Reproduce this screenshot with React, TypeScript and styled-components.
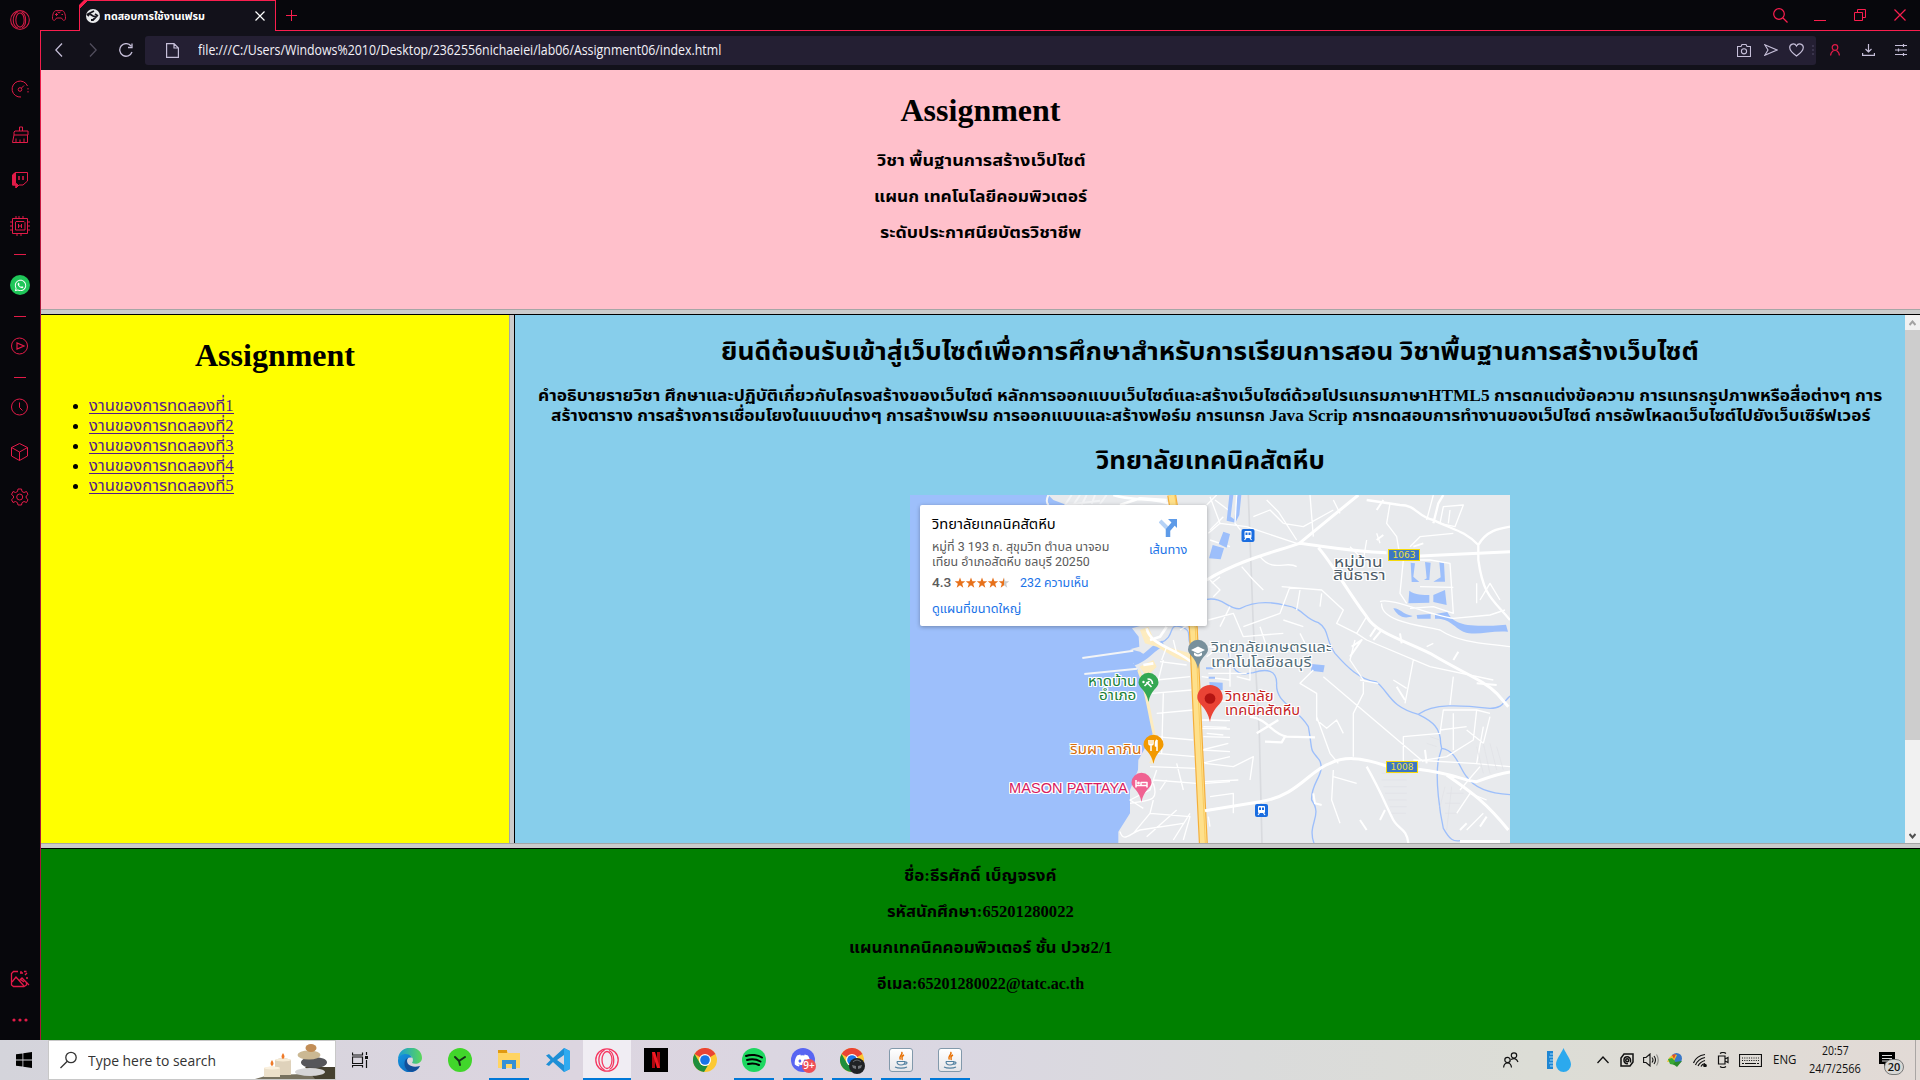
import React, { useLayoutEffect, useRef, useState } from "react";
import styled, { createGlobalStyle, css } from "styled-components";
import { FaWhatsapp, FaDiscord } from "react-icons/fa";

const RED = "#fa1e4e";
const serif = `"Liberation Serif", "Times New Roman", "Noto Sans Thai", serif`;
const ui = `"Open Sans", "Noto Sans", "Noto Sans Thai", sans-serif`;
const mapFont = `Roboto, "Noto Sans Thai", sans-serif`;

const Global = createGlobalStyle`
  * { box-sizing: border-box; }
  html, body { margin: 0; padding: 0; background: #07070c; overflow: hidden; }
  svg { display: block; flex: none; }
`;

/* Text condensed or expanded to a fixed advance width */
const FitBox = styled.span<{ $w: number }>`
  display: inline-block;
  width: ${(p) => p.$w}px;
  white-space: nowrap;
  text-align: left;
  vertical-align: top;
`;
const FitInner = styled.span`
  display: inline-block;
  white-space: nowrap;
  transform-origin: 0 50%;
`;
function Fit({ w, children }: { w: number; children: React.ReactNode }) {
  const ref = useRef<HTMLSpanElement>(null);
  const [k, setK] = useState(1);
  useLayoutEffect(() => {
    if (ref.current && ref.current.offsetWidth) setK(w / ref.current.offsetWidth);
  }, [w]);
  return (
    <FitBox $w={w}>
      <FitInner ref={ref} style={{ transform: `scaleX(${k})` }}>
        {children}
      </FitInner>
    </FitBox>
  );
}

const Screen = styled.div`
  width: 1920px;
  height: 1080px;
  display: flex;
  flex-direction: column;
  overflow: hidden;
  font-family: ${ui};
`;
const Browser = styled.div`
  display: flex;
  height: 1040px;
`;
const Side = styled.nav`
  width: 41px;
  background: linear-gradient(#07070c, #07070c) 0 0 / 40px 100% no-repeat, linear-gradient(#07070c 30px, ${RED} 30px, #a8163a 300px);
  display: flex;
  flex-direction: column;
  align-items: center;
  padding-right: 1px;
  color: #e21b48;
`;
const Slot = styled.div<{ $h: number }>`
  height: ${(p) => p.$h}px;
  width: 40px;
  display: flex;
  align-items: center;
  justify-content: center;
  flex: none;
`;
const Dash = styled.i`
  width: 12px;
  height: 1px;
  background: #e21b48;
`;
const Whats = styled.div`
  width: 20px;
  height: 20px;
  border-radius: 50%;
  background: #1fc659;
  color: #fff;
  display: flex;
  align-items: center;
  justify-content: center;
`;
const Spacer = styled.div`
  flex: 1;
`;
const Main = styled.div`
  flex: 1;
  display: flex;
  flex-direction: column;
  min-width: 0;
`;
const TabBar = styled.div`
  height: 31px;
  display: flex;
  background: #07070c;
`;
const Underlined = styled.div<{ $w?: number }>`
  ${(p) => (p.$w ? `width: ${p.$w}px;` : "flex: 1;")}
  height: 31px;
  border-bottom: 1px solid ${RED};
  display: flex;
  align-items: center;
`;
const Tab = styled.div`
  width: 197px;
  height: 31px;
  border: 1px solid ${RED};
  border-bottom: 0;
  background: linear-gradient(135deg, ${RED} 5px, #12111a 5px);
  clip-path: polygon(5px 0, 100% 0, 100% 100%, 0 100%, 0 5px);
  display: flex;
  align-items: center;
  padding-left: 6px;
  color: #fff;
  font: bold 11px/20px ${ui};
`;
const TabName = styled.div`
  margin-left: 4px;
  width: 151px;
`;
const WinButtons = styled.div`
  display: flex;
  margin-left: auto;
  color: ${RED};
`;
const WinBtn = styled.div<{ $w: number }>`
  width: ${(p) => p.$w}px;
  display: flex;
  justify-content: center;
  align-items: center;
`;
const ToolBar = styled.div`
  height: 39px;
  background: #12111a;
  display: flex;
  align-items: center;
  color: #c6bfd9;
  padding-bottom: 1px;
`;
const Nav = styled.div<{ $w: number; $dim?: boolean; $red?: boolean }>`
  width: ${(p) => p.$w}px;
  display: flex;
  justify-content: center;
  opacity: ${(p) => (p.$dim ? 0.35 : 1)};
  color: ${(p) => (p.$red ? "#e21b48" : "#c6bfd9")};
`;
const Address = styled.div`
  flex: 1;
  height: 29px;
  border-radius: 3px;
  background: #241f33;
  display: flex;
  align-items: center;
  padding-left: 21px;
  color: #f3f1f8;
  font: 14px/20px ${ui};
`;
const UrlText = styled.div`
  flex: 1;
  margin-left: 19px;
`;
const Grip = styled.i`
  width: 2px;
  height: 11px;
  margin: 0 2px 0 4px;
  background: repeating-linear-gradient(#3a344c 0 2px, transparent 2px 4px);
`;

/* Frameset */
const Frames = styled.div`
  flex: 1;
  display: flex;
  flex-direction: column;
  font: 16px/20px ${serif};
  color: #000;
`;
const Frame = styled.section<{ $bg: string; $h?: number; $w?: number }>`
  background: ${(p) => p.$bg};
  ${(p) => p.$h && `height: ${p.$h}px;`}
  ${(p) => (p.$w ? `width: ${p.$w}px;` : "")}
  overflow: hidden;
  text-align: center;
`;
const Middle = styled.div`
  height: 528px;
  display: flex;
`;
const HBar = styled.div`
  height: 6px;
  background: #cbcbcb;
  border-top: 1px solid #a6a6a6;
  border-bottom: 1px solid #000;
`;
const VBar = styled.div`
  width: 6px;
  background: #cbcbcb;
  border-left: 1px solid #a6a6a6;
  border-right: 1px solid #000;
`;
const H1 = styled.h1<{ $top: number }>`
  font: bold 32px/36px ${serif};
  margin: ${(p) => p.$top}px 0 0;
`;
const Bold = styled.p<{ $top: number }>`
  margin: ${(p) => p.$top}px 0 0;
  height: 20px;
  font: bold 16px/20px ${serif};
`;
const H2 = styled.h2<{ $top: number }>`
  font: bold 24px/30px ${serif};
  height: 30px;
  margin: ${(p) => p.$top}px 0 0;
`;
const List = styled.ul`
  margin: 23px 0 0 8px;
  padding-left: 40px;
  text-align: left;
`;
const Item = styled.li`
  height: 20px;
`;
const Link = styled.a`
  display: inline-block;
  height: 18px;
  vertical-align: top;
  border-bottom: 1px solid #551a8b;
  color: #551a8b;
`;
const Content = styled.div`
  width: 1390px;
  background: skyblue;
  text-align: center;
  overflow: hidden;
`;
const Scroll = styled.div`
  width: 15px;
  background: #f1f1f1;
  display: flex;
  flex-direction: column;
  align-items: center;
`;
const Thumb = styled.div`
  width: 15px;
  height: 410px;
  background: #cdcdcd;
`;
const Arrow = styled.div`
  height: 15px;
  display: flex;
  align-items: center;
`;

/* Map */
const MapBox = styled.div`
  position: relative;
  width: 600px;
  height: 450px;
  margin: 19px auto 0;
  background: #e8eaed;
  text-align: left;
  font-family: ${mapFont};
`;
const Card = styled.div`
  position: absolute;
  left: 10px;
  top: 10px;
  width: 287px;
  height: 121px;
  border-radius: 2px;
  background: #fff;
  box-shadow: 0 1px 4px rgba(0, 0, 0, 0.3);
  padding: 10px 12px;
  display: flex;
  justify-content: space-between;
`;
const CardCol = styled.div`
  display: flex;
  flex-direction: column;
`;
const CardLine = styled.div<{ $size: number; $lh: number; $top?: number; $c: string; $weight?: number }>`
  font-size: ${(p) => p.$size}px;
  line-height: ${(p) => p.$lh}px;
  height: ${(p) => p.$lh}px;
  margin-top: ${(p) => p.$top || 0}px;
  color: ${(p) => p.$c};
  font-weight: ${(p) => p.$weight || 400};
  display: flex;
  align-items: center;
`;
const StarGap = styled.span`
  margin: 0 11px 0 4px;
`;
const Blue = styled.span`
  color: #1a73e8;
  font-size: 12px;
  font-weight: 400;
`;
const Route = styled.div`
  display: flex;
  flex-direction: column;
  align-items: center;
  width: 54px;
  padding-top: 4px;
  color: #1a73e8;
  font-size: 12px;
  line-height: 16px;
  gap: 5px;
`;
const Label = styled.div<{ $x: number; $y: number; $c: string; $size?: number }>`
  position: absolute;
  left: ${(p) => p.$x}px;
  top: ${(p) => p.$y}px;
  color: ${(p) => p.$c};
  font-size: ${(p) => p.$size || 14}px;
  line-height: 14px;
  text-shadow: 1px 0 #fff, -1px 0 #fff, 0 1px #fff, 0 -1px #fff, 1px 1px #fff, -1px -1px #fff, 1px -1px #fff, -1px 1px #fff;
`;
const LatinLabel = styled(Label)`
  font-family: "Liberation Sans", Arial, sans-serif;
`;
const Shield = styled.div<{ $x: number; $y: number }>`
  position: absolute;
  left: ${(p) => p.$x}px;
  top: ${(p) => p.$y}px;
  width: 32px;
  height: 12px;
  border: 1px solid #f5d90a;
  background: #3c76c2;
  color: #f0e03c;
  font: 9px/10px "DejaVu Sans", sans-serif;
  text-align: center;
`;

/* Taskbar */
const Task = styled.footer`
  height: 40px;
  display: flex;
  background: linear-gradient(90deg, #d4d4db, #dcd5e0 30%, #dad7e2 50%, #dadbdb 65%, #dcddd6 80%, #e2dad6);
  color: #111;
`;
const Start = styled.div`
  width: 48px;
  display: flex;
  align-items: center;
  justify-content: center;
`;
const Search = styled.div`
  width: 288px;
  background: #fff;
  border: 1px solid #c8c8c8;
  display: flex;
  align-items: center;
  padding-left: 11px;
  font: 15px/20px ${ui};
  color: #333;
  overflow: hidden;
`;
const SearchText = styled.div`
  margin-left: 10px;
  width: 168px;
`;
const TaskCell = styled.div<{ $w?: number; $open?: boolean; $active?: boolean }>`
  width: ${(p) => p.$w || 49}px;
  height: 40px;
  position: relative;
  display: flex;
  align-items: center;
  justify-content: center;
  ${(p) => p.$active && "background: linear-gradient(90deg, transparent 1px, #f0edf3 1px);"}
  ${(p) =>
    (p.$open || p.$active) &&
    css`
      &::after {
        content: "";
        position: absolute;
        bottom: 0;
        left: ${p.$active ? 1 : 5}px;
        right: ${p.$active ? 0 : 4}px;
        height: 2px;
        background: #0078d7;
      }
    `}
`;
const Netflix = styled.div`
  width: 24px;
  height: 24px;
  background: #000;
  color: #e50914;
  display: flex;
  justify-content: center;
`;
const Java = styled.div`
  width: 24px;
  height: 24px;
  border: 1px solid #8299ab;
  border-radius: 3px;
  background: linear-gradient(#fff, #e6e6e9);
  display: flex;
  justify-content: center;
  align-items: center;
`;
const DiscordBall = styled.div`
  width: 24px;
  height: 24px;
  border-radius: 50%;
  background: #5865f2;
  color: #fff;
  display: flex;
  justify-content: center;
  align-items: center;
`;
const Nine = styled.div`
  position: absolute;
  left: 24px;
  top: 19px;
  width: 14px;
  height: 14px;
  border-radius: 50%;
  background: #ee4e56;
  color: #fff;
  font: 600 10px/13px ${ui};
  text-align: center;
`;
const Helmet = styled.svg`
  position: absolute;
  left: 22px;
  top: 18px;
`;
const Tray = styled.div`
  display: flex;
  margin-left: auto;
  align-items: center;
`;
const TrayCell = styled.div<{ $w: number }>`
  width: ${(p) => p.$w}px;
  display: flex;
  justify-content: center;
  align-items: center;
  flex: none;
  position: relative;
`;
const Clock = styled.div`
  width: 70px;
  text-align: center;
  font: 12px/18px ${ui};
  display: flex;
  flex-direction: column;
  align-items: center;
`;
const Lang = styled.div`
  width: 31px;
  text-align: center;
  font: 12px/20px ${ui};
`;
const Count = styled.div`
  position: absolute;
  left: 14px;
  top: 7px;
  width: 20px;
  height: 16px;
  border-radius: 8px;
  border: 1px solid #777;
  background: #d8d8d6;
  font: 600 11px/14px ${ui};
  text-align: center;
`;
const Peek = styled.div`
  width: 5px;
  height: 40px;
  margin-left: 11px;
  border-left: 1px solid #aaa6a4;
`;

type IconProps = { w?: number; h?: number; vb?: string; sw?: number; children: React.ReactNode };
const Ic = ({ w = 18, h = 18, vb, sw = 1, children }: IconProps) => (
  <svg width={w} height={h} viewBox={vb || `0 0 ${w} ${h}`} fill="none" stroke="currentColor" strokeWidth={sw}>
    {children}
  </svg>
);

const Chrome = () => (
  <svg width="24" height="24" viewBox="0 0 24 24">
    <circle cx="12" cy="12" r="12" fill="#fcc934" />
    <path d="M12 12 1.6 6A12 12 0 0 1 22.4 6Z" fill="#ea4335" />
    <path d="M1.6 6 6.800 15A6 6 0 0 0 15 17.200L11 24A12 12 0 0 1 1.6 6Z" fill="#1e8e3e" />
    <circle cx="12" cy="12" r="6" fill="#fff" />
    <circle cx="12" cy="12" r="4.8" fill="#1a73e8" />
  </svg>
);
const JavaIcon = () => (
  <Java>
    <svg width="18" height="20" viewBox="0 0 18 20" fill="none">
      <path d="M9.500 2C12 4 6 6 8.500 9.500M12 5C8 7 11 8 10 10" stroke="#e76f00" strokeWidth="1.400" />
      <path d="M5 11.500H13M5 11.500C5 14 6 15 9 15S13 14 13 11.500M13 12C16 11.500 15.500 14.500 12.500 14M3 17C6 18.500 12 18.500 15 17" stroke="#5382a1" strokeWidth="1.200" />
    </svg>
  </Java>
);
const OperaRing = ({ size, c, sw }: { size: number; c: string; sw: number }) => (
  <svg width={size} height={size} viewBox="0 0 24 24" fill="none" stroke={c} strokeWidth={sw}>
    <circle cx="12" cy="12" r="11.200" />
    <ellipse cx="12" cy="12" rx="5" ry="8.500" />
    <path d="M9.500 2C2 6 2 18 9.500 22M14 2.500C20 5 20.500 18.500 14.500 21.500" />
  </svg>
);

/* A pin whose tip sits at x, y */
const Pin = ({ x, y, s, c, children }: { x: number; y: number; s: number; c: string; children?: React.ReactNode }) => (
  <g transform={`translate(${x} ${y}) scale(${s})`}>
    <path d="M0 0C-2-12-10-14-10-19.500A10 9.700 0 0 1 10-19.500C10-14 2-12 0 0Z" fill={c} />
    {children}
  </g>
);
const Train = ({ x, y }: { x: number; y: number }) => (
  <g transform={`translate(${x} ${y})`}>
    <rect x="-6.500" y="-6.500" width="13" height="13" rx="2" fill="#1a6de0" />
    <rect x="-3.500" y="-4.500" width="7" height="7" rx="1" fill="#fff" />
    <path d="M-2.500-3H-.5V-.5H-2.500ZM.5-3H2.500V-.5H.5Z" fill="#1a6de0" />
    <path d="M-3.500 4.500-2 2.500M3.500 4.500 2 2.500" stroke="#fff" strokeWidth="1.200" />
  </g>
);

const MapArt = () => (
  <svg width="600" height="348" viewBox="0 0 600 348" fill="none" strokeLinejoin="round">
    <g transform="translate(-10 -15) scale(.33333)">
      <path fill="#9dbffb" d="M30 45H445L460 60 500 75H600L560 150 690 300 720 438 696 445 716 470 718 500 690 508 720 515 735 525 700 550 714 570 735 640 745 680 760 760 715 840 714 870 690 930 690 1000 655 1055V1090H30Z" />
      <path stroke="#9dbffb" strokeWidth="18" d="M700 548C750 530 750 505 790 490" />
      <path stroke="#9dbffb" strokeWidth="4" d="M780 490C830 470 800 430 840 440S860 470 870 490" />
      <path stroke="#f3f4f6" strokeWidth="6" d="M547 534 700 512M553 582 712 566M445 45C438 60 440 70 446 75M495 75 515 45M520 75 540 45M545 75 560 45M575 72 585 45M600 72 620 45M500 75 600 62" />
      <path fill="#e8eaed" d="M600 75 640 45H815L850 75Z" />
      <path fill="#fdecc0" d="M720 450 745 440 760 475 800 500 870 520 880 550 830 535 770 500 735 490ZM718 560 760 540 770 560 740 590Z" />
      <path stroke="#fdecc0" strokeWidth="9" d="M716 570C740 630 745 690 763 765M752 850 765 825" />
      <path stroke="#fff" strokeWidth="8" d="M740 445C750 500 840 505 890 560M750 480 780 470 800 440M730 555 760 550M660 75 720 55 800 60M640 45C700 65 760 50 820 75" />
      <path stroke="#fff" strokeWidth="4" d="M780 545 860 555M770 600 870 590M755 640 875 630M770 700 880 690M790 640 785 820M765 770 880 780M770 820 885 830M750 860 890 865M760 900 890 910M770 870 750 930 690 960 730 985M690 970C740 960 780 970 760 910M780 930 800 900M750 1000 760 960M830 850 850 930M660 1055C670 1090 690 1060 720 1050L850 1030M700 1060 750 1000 870 1010 850 1080M740 1070 830 990M820 1080 870 1000M790 540 775 600M820 480 830 520M840 450 870 430M800 500 785 540" />
      <path stroke="#fff" strokeWidth="4" d="M920 75 950 45M945 60 985 90M930 150 970 110M930 180 990 200M930 300 960 330 940 350M960 290 935 310M925 500 985 510M935 560 985 550M905 590 990 600M920 660 990 665M905 720 990 722M905 745 990 747M910 770 990 772M905 810 985 790M905 850 990 830M915 910 990 905M920 990 990 980M930 1040 925 1010" />
      <path stroke="#f4ae3a" strokeWidth="27" d="M815 45 880 445 893 740 910 1090" />
      <path stroke="#fee08b" strokeWidth="20" d="M815 45 880 445 893 740 910 1090" />
      <path stroke="#f7c04a" strokeWidth="2" d="M824 45 886 445 899 740 916 1090" />
    </g>
    <g transform="translate(290 -15) scale(.33333)">
      <path fill="#9dbffb" d="M88 45H100L92 110 103 118 112 45H124L118 105 106 128 80 122ZM70 155 90 162 80 203 56 192ZM38 195 72 205 62 238 27 235ZM632 248 645 250 640 290 658 306 635 306ZM675 246 692 248 688 300H672L680 295ZM718 246 732 250 735 305H700L722 292ZM628 332C645 345 670 345 688 345V368L625 370ZM700 345 735 330 740 375 700 366ZM580 385C600 384 605 402 638 408 610 420 590 405 580 385ZM650 405 692 402V416H652ZM705 402 742 396C760 430 790 445 918 434L924 455C870 450 830 470 790 455 760 440 750 415 705 416ZM335 552 374 556 370 577 333 572ZM28 606 68 608V630H30ZM18 562H40V568H18ZM26 590H45V596H26Z" />
      <path stroke="#d9dbdf" strokeWidth="5" d="M145 45 160 440 178 760 186 1090" />
      <path stroke="#9dbffb" strokeWidth="4" d="M20 358C70 350 85 390 120 386 150 370 190 358 260 377 310 385 310 415 355 428 390 450 375 480 405 520 440 560 480 600 530 606 570 640 570 680 655 703 700 725 722 745 722 790L725 805C770 810 780 870 800 890 820 920 860 940 930 944M655 703C700 670 780 675 870 685 910 685 910 665 930 648M725 805 715 840C705 900 720 1000 730 1045 750 1080 760 1085 780 1082M85 520C100 590 130 585 160 578 200 565 230 570 230 610 225 670 290 680 325 740 340 820 325 800 358 840 380 880 330 910 335 960 370 1010 320 1030 342 1090" />
      <path stroke="#fff" strokeWidth="9" d="M20 300C120 240 210 220 298 190L475 45M298 190C380 200 450 215 560 218M660 228 930 215M355 203C390 240 440 330 500 410 530 460 610 480 690 520 790 580 850 600 890 640L925 680M15 992 180 965C290 950 330 870 390 850 430 830 480 830 560 858M655 868C760 880 800 905 830 905 870 890 900 880 930 876M740 885C820 940 860 970 925 1050" />
      <path stroke="#fff" strokeWidth="7" d="M500 60 600 75C650 75 650 110 700 120 760 150 790 150 835 195V240C850 350 880 360 930 420M700 130 715 70 730 45M835 195C860 150 900 145 930 140M500 860C540 930 560 980 575 1010 590 1050 620 1040 625 1090M150 710C210 720 210 760 260 770L345 772M170 760 235 720M195 785 245 787 255 770" />
      <path stroke="#fff" strokeWidth="4" d="M30 50 60 130 140 140 290 190M60 130 25 160M110 45 105 130 130 160M200 60 235 95 290 180M160 110 210 90 250 130M125 260 160 300 190 330M180 230C220 280 260 240 290 260M250 130 310 140 400 90M340 170 330 45M400 60 420 100M450 200 490 240 500 180M530 160 540 190M600 230 590 170 560 130 570 70M630 200 660 170 760 160M700 45 680 120M730 80 790 75 765 140 720 130ZM750 90 745 130M660 320 760 322M620 370 600 340 610 240 690 240 750 250 760 400 700 380 630 385M540 365C570 350 700 410 760 415L870 405 915 390M545 370C540 430 690 440 720 450 780 490 860 490 930 500M840 360 870 310 900 360M830 310V370M245 320 365 330 430 390 410 430 470 460 500 410M270 320 240 400 130 440M300 330 290 390M365 340 360 380M90 380 60 440M25 420 100 400 130 470 250 460M180 440 200 500M250 420 310 440M300 460 330 520M470 460 500 480 690 560 880 600M760 590 750 675M640 540 615 670M580 600 620 625M370 590 670 845M340 570 300 610 350 640 350 720 380 745 410 720 430 760M350 710 390 820 415 850M465 480 450 540 490 600 490 640 460 700 460 830M480 600 535 610M400 870 395 960 420 1030M400 890 470 910M610 850V770L720 760 730 690 830 690 820 780 740 830ZM720 750 800 740M760 700V810M800 750 850 790 870 710M830 690 870 700M680 500 700 490M640 840 820 850 930 860M830 850 850 740M780 930 840 860M770 1000 810 940 860 960M800 1050 850 1000M15 850 100 860 160 830 150 900M15 905 115 900M100 1000V940L30 950M10 810 90 815M20 760 70 765M10 740 80 742M10 720 80 722M110 590 150 600 150 520M90 480V620M25 580H140M20 530 60 500" />
      <path stroke="#fff" strokeWidth="6" d="M510 470 530 440M520 480 545 450M605 490 600 460M760 540 775 515M830 610 890 615M615 660 590 620M450 530 485 480 455 500M540 1020 555 990M500 1050 480 1020M340 940 345 970 365 975M680 850 675 810M780 1050 800 1030M860 1010 840 1040M530 90 550 60M640 200 670 190M550 165 530 180" />
      <path stroke="#dfe1e5" strokeWidth="2" d="M545 880H620M545 900H620M550 920H620M555 940H620M565 960H620M570 980H620M575 1000H618M850 880 830 800M870 880 850 790M890 870 870 790M910 870 890 800M680 790 710 800M690 770 720 780M735 920 720 980M755 920 740 1050M740 940H790M735 970H780M735 1000H770" />
      <path fill="#fff" d="M780 1080H900V1090H780Z" />
    </g>
    <Train x={338} y={40.500} />
    <Train x={351.500} y={315.500} />
    <Pin x={288} y={174} s={1} c="#78909c">
      <path d="M-7-19 0-22.500 7-19 0-15.500ZM-4-16.500V-14C-2-12 2-12 4-14V-16.500L0-14.500Z" fill="#fff" />
    </Pin>
    <Pin x={238.500} y={207} s={1} c="#34a853">
      <path d="M-4-16 1-21M-1-23C2-23 4-21 4-18M-2-20 3-15" stroke="#fff" strokeWidth="1.600" />
      <circle cx="-5" cy="-20" r="1.200" fill="#fff" />
    </Pin>
    <Pin x={243.500} y={269} s={1} c="#f29900">
      <path d="M-4.500-24V-20.500C-4.500-18.500-.5-18.500-.5-20.500V-24M-2.500-24V-13M3.500-24V-13M3.500-24C1.500-23 2-20 2-18H3.500" stroke="#fff" strokeWidth="1.500" />
    </Pin>
    <Pin x={231.500} y={307} s={1} c="#f06292">
      <path d="M-5.500-22V-14.500M-5.500-16.500H5.500V-14.500M5.500-17V-19.500H-.5V-17" stroke="#fff" strokeWidth="1.500" />
      <circle cx="-3" cy="-19" r="1.400" fill="#fff" />
    </Pin>
    <Pin x={300} y={227} s={1.270} c="#ea4335">
      <circle cx="0" cy="-18.500" r="4.200" fill="#b31412" />
    </Pin>
  </svg>
);

const Stars = () => (
  <svg width="54" height="12" viewBox="0 0 54 12">
    <defs>
      <linearGradient id="half">
        <stop offset=".5" stopColor="#e7711b" />
        <stop offset=".5" stopColor="#ccc" />
      </linearGradient>
    </defs>
    {[0, 1, 2, 3, 4].map((i) => (
      <path key={i} transform={`translate(${i * 11} 0)`} d="M5 .5 6.400 4.300H10.200L7.200 6.700 8.300 10.700 5 8.300 1.700 10.700 2.800 6.700-.2 4.300H3.600Z" fill={i === 4 ? "url(#half)" : "#e7711b"} />
    ))}
  </svg>
);

const Sidebar = () => (
  <Side>
    <Slot $h={40}><OperaRing size={20} c="#d01c45" sw={1.300} /></Slot>
    <Slot $h={26} />
    <Slot $h={46}>
      <Ic><path d="M10 17A8 8 0 1 1 16.500 6" /><path d="M17 8V14" strokeDasharray="1.500 1.500" /><circle cx="9" cy="9.500" r="1.800" /><path d="M10.500 8 13 5.500" /></Ic>
    </Slot>
    <Slot $h={45}>
      <Ic><path d="M8.500 5V1H11.500V5M4 5H17V9H3V6ZM3 9 1.500 16.500H16.500V9M5 16.500V12.500M9 16.500V13.500M13 16.500V12.500" /></Ic>
    </Slot>
    <Slot $h={45}>
      <Ic><path d="M4.500 1.500H16.500V10L12 14H8L5 17V14H1.500V4Z" /><path d="M1.500 4 4.500 1.500V12L7 14 5 17V14H1.500Z" fill="currentColor" /><path d="M8 5V9M12 5V9" strokeWidth="1.500" /></Ic>
    </Slot>
    <Slot $h={47}>
      <Ic w={20} h={20}><path d="M2.500 2.500H17.500V17.500H2.500Z" /><path d="M6 5.500H14L15 6.500V14H5.500V6ZM8.500 8V12M11.500 8V12M8.500 10H11.500" /><path d="M6 0V2M9 0V2M13 0V2M0 6H2M0 10H2M0 14H2M18 6H20M18 10H20M18 14H20M7 17V20M11 17V20" /></Ic>
    </Slot>
    <Slot $h={11}><Dash /></Slot>
    <Slot $h={50}><Whats><FaWhatsapp size={13} /></Whats></Slot>
    <Slot $h={12}><Dash /></Slot>
    <Slot $h={48}><Ic><circle cx="8.500" cy="9" r="8" /><path d="M6 6V12L13 9 6 6Z" strokeWidth="1.200" /></Ic></Slot>
    <Slot $h={14}><Dash /></Slot>
    <Slot $h={46}><Ic><circle cx="8.500" cy="9" r="8" /><path d="M8.500 4.500V9.500L11.500 12.500" /></Ic></Slot>
    <Slot $h={44}><Ic><path d="M8.500.5 16.500 4.500V13L8.500 17.500.5 13V4.500ZM.5 4.500 8.500 9 16.500 4.500M8.500 9V17.500" /></Ic></Slot>
    <Slot $h={46}>
      <Ic>
        <path d="M7 1H10.500L11 3.500 13 4.500 15.500 3.500 17 6.500 15.200 8V10L17 11.700 15.500 14.500 13 13.500 11 14.700 10.500 17H7L6.500 14.700 4.500 13.500 2 14.500.5 11.700 2.500 10V8L.5 6.500 2 3.500 4.500 4.500 6.500 3.500Z" />
        <circle cx="8.700" cy="9" r="3" />
      </Ic>
    </Slot>
    <Spacer />
    <Slot $h={43}>
      <Ic w={20}><path d="M8 1.500H3.500L1.500 3.500V15L3.500 16.500H14L16.500 15V12" strokeWidth="1.300" /><path d="M2 12 6 7 14 16M9 11 12 8 19 15M14 12 10 9M11 3V1M10 3H13M15 5 17 3M16 8H18M14 1.500H16.500" strokeWidth="1.300" /></Ic>
    </Slot>
    <Slot $h={40}>
      <svg width="16" height="4" fill="#e21b48"><circle cx="2" cy="2" r="1.600" /><circle cx="8" cy="2" r="1.600" /><circle cx="14" cy="2" r="1.600" /></svg>
    </Slot>
  </Side>
);

const TaskBar = () => (
  <Task>
    <Start>
      <svg width="16" height="16" fill="#000"><path d="M0 2.300 6.500 1.400V7.600H0ZM7.300 1.300 16 0V7.600H7.300ZM0 8.400H6.500V14.600L0 13.700ZM7.300 8.400H16V16L7.300 14.700Z" /></svg>
    </Start>
    <Search>
      <Ic w={18} h={18} sw={1.300}><circle cx="11" cy="6.500" r="5.200" /><path d="M7.300 10.200.5 17" /></Ic>
      <SearchText><Fit w={128}>Type here to search</Fit></SearchText>
      <svg width="80" height="38" viewBox="0 0 80 38">
        <path d="M0 38 14 34 50 33 80 26V38Z" fill="#77715f" />
        <path d="M50 26H80V38H60Z" fill="#45402f" />
        <path d="M20 19Q28 15 36 19V34H20Z" fill="#dfd2bb" />
        <path d="M9 27Q17 24 25 27V36H9Z" fill="#ece0ca" />
        <ellipse cx="28" cy="19" rx="8" ry="1.500" fill="#f6ebd6" />
        <ellipse cx="17" cy="27" rx="8" ry="1.500" fill="#fbf1df" />
        <path d="M28 12Q31 16 28 18 25 16 28 12ZM17 19Q20 23 17 25 14 23 17 19Z" fill="#ef7a28" />
        <ellipse cx="55" cy="31" rx="15" ry="4" fill="#d6d5d7" />
        <ellipse cx="59" cy="21.500" rx="13" ry="5.500" fill="#56565a" />
        <ellipse cx="54" cy="14" rx="11.500" ry="4.500" fill="#cbb893" />
        <ellipse cx="56" cy="7" rx="5.500" ry="4" fill="#c28d56" />
      </svg>
    </Search>
    <TaskCell $w={48}>
      <Ic w={16} h={16} sw={1.200}><path d="M.5.5V3H10.500V.5M.5 5H10.500V11.500H.5ZM.5 15.500V13.500H10.500V15.500M14.500 0V3M14.500 8V16" /><path d="M13 4H16V7H13Z" fill="currentColor" stroke="none" /></Ic>
    </TaskCell>
    <TaskCell $w={51}>
      <svg width="24" height="24" viewBox="0 0 24 24">
        <defs>
          <linearGradient id="edge" x1="0" x2="1"><stop stopColor="#199bd8" /><stop offset="1" stopColor="#5bd75a" /></linearGradient>
          <linearGradient id="edgeB" x1="0" x2="1" y1="0" y2="1"><stop stopColor="#1593df" /><stop offset="1" stopColor="#0b60b4" /></linearGradient>
        </defs>
        <path d="M0 11C1-4 24-4 24 10 24 15 18 17 14 15 16 12 15 8 10 7 6 6 2 8 0 11Z" fill="url(#edge)" />
        <path d="M0 12C1 5 12 4 14 10 9 8 7 14 10 18S18 22 22 18C18 25 10 26 5 22 1 19 0 16 0 12Z" fill="url(#edgeB)" />
        <path d="M10 10C7 14 11 21 22 18 19 24 13 25 9 22 5 18 6 11 10 10Z" fill="#124f9a" />
      </svg>
    </TaskCell>
    <TaskCell>
      <svg width="24" height="24" viewBox="0 0 24 24"><circle cx="12" cy="12" r="12" fill="#41d62b" /><path d="M7 9 11 13 17 9M11 13 12 17" stroke="#16301a" strokeWidth="2" fill="none" strokeLinecap="round" /></svg>
    </TaskCell>
    <TaskCell $open>
      <svg width="22" height="20" viewBox="0 0 22 20"><path d="M0 1H9L10.500 3H22V18H0Z" fill="#ffd462" /><path d="M0 0H9V3H0Z" fill="#e09a10" /><path d="M4 19V10H18V19H14V14H8V19Z" fill="#3590d5" /></svg>
    </TaskCell>
    <TaskCell>
      <svg width="24" height="24" viewBox="0 0 24 24"><path d="M18 0 24 3V21L18 24 7 14 3 18 0 16.500 4.500 12 0 7.500 3 6 7 10ZM18 7 11 12 18 17Z" fill="#1e8fd6" fillRule="evenodd" /><path d="M18 0 24 3V21L18 24Z" fill="#2faaf0" /></svg>
    </TaskCell>
    <TaskCell $active><OperaRing size={24} c="#f5365f" sw={1.300} /></TaskCell>
    <TaskCell>
      <Netflix><svg width="10" height="24" viewBox="0 0 10 24"><path d="M1 4H4V20H1ZM6 4H9V20H6Z" fill="#b20710" /><path d="M1 4H4L9 20H6Z" fill="#f01a24" /></svg></Netflix>
    </TaskCell>
    <TaskCell><Chrome /></TaskCell>
    <TaskCell $open>
      <svg width="24" height="24" viewBox="0 0 24 24"><circle cx="12" cy="12" r="12" fill="#1ed760" /><path d="M4 8C9 6 16 7 20 9.500M5 12C10 10.500 15 11.500 18.500 13.500M6 16C10 15 14 15.500 17 17" fill="none" stroke="#000" strokeWidth="2" strokeLinecap="round" /></svg>
    </TaskCell>
    <TaskCell $open><DiscordBall><FaDiscord size={17} /></DiscordBall><Nine>9+</Nine></TaskCell>
    <TaskCell $open>
      <Chrome />
      <Helmet width="16" height="16" viewBox="0 0 16 16"><circle cx="8" cy="8" r="8" fill="#202225" /><path d="M3 7 7 8V11L4 10ZM9 8 13 7 12 10 9 11Z" fill="#73767b" /><path d="M4 4Q8 0 12 4" stroke="#66696e" fill="none" /></Helmet>
    </TaskCell>
    <TaskCell $open><JavaIcon /></TaskCell>
    <TaskCell $open><JavaIcon /></TaskCell>
    <Tray>
      <TrayCell $w={34}><Ic w={16} h={16} sw={1.200}><circle cx="11" cy="3.500" r="2.700" /><path d="M8 7.500Q13 5 15 10M.6 15.500Q1 11 4.500 11T8.500 15.500" /><circle cx="4.500" cy="8" r="2.700" /></Ic></TrayCell>
      <TrayCell $w={62}>
        <svg width="26" height="24" viewBox="0 0 26 24"><path d="M1 3H7V21H1Z" fill="#1d86d3" /><path d="M4 6H7M3 9H7M4 12H7M3 15H7M4 18H7" stroke="#9ed8fa" /><path d="M17.500 0C20 6 25 11 25 16.500A7.500 7.500 0 0 1 10 16.500C10 11 15 6 17.500 0Z" fill="#2ba9ee" /></svg>
      </TrayCell>
      <TrayCell $w={26}><Ic w={12} h={8} sw={1.300}><path d="M.5 7 6 1 11.500 7" /></Ic></TrayCell>
      <TrayCell $w={22}><Ic w={14} h={14} sw={1.500}><path d="M4 1H13V9L10 13H1V5ZM4 7A3.200 3.200 0 0 1 10.500 7V9.500" /><circle cx="7.200" cy="7.200" r="1.500" /><path d="M4 7A3.200 3.200 0 0 0 8 10.500" /></Ic></TrayCell>
      <TrayCell $w={26}><Ic w={17} h={14} sw={1.100}><path d="M.6 4.500H3L7 1V13L3 9.500H.6ZM9 4.500Q11 7 9 9.500M11 3Q14 7 11 11" /><path d="M13.500 1.500Q17 7 13.500 12.500" opacity=".4" /></Ic></TrayCell>
      <TrayCell $w={22}>
        <svg width="16" height="14" viewBox="0 0 16 14"><circle cx="9.500" cy="5.500" r="5.500" fill="#3978c7" /><path d="M0 9C2 3 7 0 10 2L7 8Z" fill="#f0c62c" /><path d="M1 6 5 5 8 8 8 12 3 11Z" fill="#38a835" /><path d="M5 2 9 1 7 6Z" fill="#e04b2c" /><path d="M8 9 15 8 10 14 6 11Z" fill="#2a8a2c" /></svg>
      </TrayCell>
      <TrayCell $w={28}><Ic w={14} h={14} sw={1.200}><path d="M.5 10Q3 3 12 1.500M2.500 12Q5 6 12 4.500M5 13Q7 9 12 7.500M8 13.500Q9 11 12 10.500" /><circle cx="12" cy="12.500" r="1.200" fill="currentColor" /></Ic></TrayCell>
      <TrayCell $w={18}><Ic w={12} h={16} sw={1.200}><path d="M3 1.500Q6-.5 9 1.500M3 14.500Q6 16.500 9 14.500M1.500 4H8V12H1.500ZM8 7 11 5.500V10.500L8 9" /></Ic></TrayCell>
      <TrayCell $w={37}><Ic w={23} h={13}><path d="M.5.5H22.500V12.500H.5Z" strokeWidth="1.200" /><path d="M3 4H20M3 6.500H20" strokeDasharray="1 1.300" /><path d="M3 9.500H5M6 9.500H17M18 9.500H20" /></Ic></TrayCell>
      <Lang><Fit w={23}>ENG</Fit></Lang>
      <Clock><Fit w={27}>20:57</Fit><Fit w={52}>24/7/2566</Fit></Clock>
      <TrayCell $w={34}>
        <svg width="16" height="16" viewBox="0 0 16 16"><path d="M0 0H16V12H8L5 15V12H0Z" fill="#000" /><path d="M3 3.500H13M3 6.500H13M3 9H9" stroke="#ddd" /></svg>
        <Count>20</Count>
      </TrayCell>
      <Peek />
    </Tray>
  </Task>
);

const jobs = [1, 2, 3, 4, 5];

export default function App() {
  return (
    <Screen>
      <Global />
      <Browser>
        <Sidebar />
        <Main>
          <TabBar>
            <Underlined $w={38}>
              <WinBtn $w={36}>
                <Ic w={14} h={11}><g stroke="#d01c45"><path d="M4 .6H10C12 .6 13.500 4 13.500 8 13.500 10.500 11.500 11 10.500 9.500L9.500 8H4.500L3.500 9.500C2.500 11 .5 10.500 .5 8 .5 4 2 .6 4 .6ZM5.500 2 7 3 8.500 2M3 4.500H6M4.500 3V6M9.500 4.500H11" /></g></Ic>
              </WinBtn>
            </Underlined>
            <Tab>
              <svg width="14" height="14" viewBox="0 0 14 14"><circle cx="7" cy="7" r="7" fill="#e9eaec" /><path d="M8 2 3 4.500 7 7 10 8 7 11 5 11M9 5 12 7M1 5 3 7" stroke="#15141d" strokeWidth="1.800" fill="none" /></svg>
              <TabName><Fit w={101}>ทดสอบการใช้งานเฟรม</Fit></TabName>
              <Ic w={10} h={10} sw={1.200}><path d="M.5.5 9.500 9.500M9.500.5.5 9.500" /></Ic>
            </Tab>
            <Underlined>
              <WinBtn $w={30}><Ic w={11} h={11}><path stroke={RED} d="M5.500 0V11M0 5.500H11" /></Ic></WinBtn>
              <WinButtons>
                <WinBtn $w={40}><Ic w={15} h={15} sw={1.200}><circle cx="6" cy="6" r="5.300" /><path d="M10 10 14.500 14.500" /></Ic></WinBtn>
                <WinBtn $w={40}><Ic w={12} h={12}><path d="M0 11.500H12" /></Ic></WinBtn>
                <WinBtn $w={40}><Ic w={12} h={12}><path d="M.5 3.500H8.500V11.500H.5ZM3.500 3.500V.5H11.500V8.500H8.500" /></Ic></WinBtn>
                <WinBtn $w={40}><Ic w={12} h={12} sw={1.200}><path d="M.5.5 11.500 11.500M11.500.5.5 11.500" /></Ic></WinBtn>
              </WinButtons>
            </Underlined>
          </TabBar>
          <ToolBar>
            <Nav $w={35}><Ic w={8} h={14} sw={1.300}><path d="M7 .5.8 7 7 13.500" /></Ic></Nav>
            <Nav $w={33} $dim><Ic w={8} h={14} sw={1.300}><path d="M1 .5 7.200 7 1 13.500" /></Ic></Nav>
            <Nav $w={34}><Ic w={14} h={14} sw={1.300}><path d="M13 9A6.300 6.300 0 1 1 12 3M13 .5V4.500H9" /></Ic></Nav>
            <Nav $w={2} />
            <Address>
              <Ic w={13} h={15} sw={1.200}><path stroke="#c6bfd9" d="M.6.6H8L12.400 5V14.400H.6ZM8 .6V5H12.400" /></Ic>
              <UrlText><Fit w={523}>file:///C:/Users/Windows%2010/Desktop/2362556nichaeiei/lab06/Assignment06/index.html</Fit></UrlText>
              <Nav $w={26}><Ic w={14} h={13} sw={1.100}><path d="M.5 2.500H4L5 .5H9L10 2.500H13.500V12.500H.5Z" /><circle cx="7" cy="7.300" r="2.600" /></Ic></Nav>
              <Nav $w={27}><Ic w={14} h={12} sw={1.100}><path d="M.8.800 13 6 .8 11.300 4 6Z" /></Ic></Nav>
              <Nav $w={24}><Ic w={15} h={14} sw={1.200}><path d="M7.500 13C2 9 .7 7 .7 4.500 .7 1 5.500-.5 7.500 3 9.500-.5 14.300 1 14.300 4.500 14.300 7 13 9 7.500 13Z" /></Ic></Nav>
              <Grip />
            </Address>
            <Nav $w={37} $red><Ic w={10} h={12} sw={1.200}><circle cx="5" cy="3.500" r="2.800" /><path d="M.6 11.500C.6 8.500 2 7.500 3.500 6.500M9.400 11.500C9.400 8.500 8 7.500 6.500 6.500" /></Ic></Nav>
            <Nav $w={30}><Ic w={13} h={12} sw={1.200}><path d="M6.500 0V8M3.500 5 6.500 8 9.500 5M.6 9V11.400H12.400V9" /></Ic></Nav>
            <Nav $w={36}><Ic w={12} h={12} sw={1.200}><path d="M0 1.500H12M0 6H12M0 10.500H12M8.500 0V3M3.500 4.500V7.500M8.500 9V12" /></Ic></Nav>
            <Nav $w={1} />
          </ToolBar>
          <Frames>
            <Frame $bg="pink" $h={239}>
              <H1 $top={22}><Fit w={160}>Assignment</Fit></H1>
              <Bold $top={23}><Fit w={208}>วิชา พื้นฐานการสร้างเว็ปไซต์</Fit></Bold>
              <Bold $top={16}><Fit w={213}>แผนก เทคโนโลยีคอมพิวเตอร์</Fit></Bold>
              <Bold $top={16}><Fit w={201}>ระดับประกาศนียบัตรวิชาชีพ</Fit></Bold>
            </Frame>
            <HBar />
            <Middle>
              <Frame $bg="#ffff00" $w={468}>
                <H1 $top={22}><Fit w={160}>Assignment</Fit></H1>
                <List>
                  {jobs.map((n) => (
                    <Item key={n}><Link><Fit w={145}>งานของการทดลองที่{n}</Fit></Link></Item>
                  ))}
                </List>
              </Frame>
              <VBar />
              <Content>
                <H2 $top={22}><Fit w={978}>ยินดีต้อนรับเข้าสู่เว็บไซต์เพื่อการศึกษาสำหรับการเรียนการสอน วิชาพื้นฐานการสร้างเว็บไซต์</Fit></H2>
                <Bold $top={19}><Fit w={1344}>คำอธิบายรายวิชา ศึกษาและปฏิบัติเกี่ยวกับโครงสร้างของเว็บไซต์ หลักการออกแบบเว็บไซต์และสร้างเว็บไซต์ด้วยโปรแกรมภาษาHTML5 การตกแต่งข้อความ การแทรกรูปภาพหรือสื่อต่างๆ การ</Fit></Bold>
                <Bold $top={0}><Fit w={1319}>สร้างตาราง การสร้างการเชื่อมโยงในแบบต่างๆ การสร้างเฟรม การออกแบบและสร้างฟอร์ม การแทรก Java Scrip การทดสอบการทำงานของเว็ปไซต์ การอัพโหลดเว็บไซต์ไปยังเว็บเซิร์ฟเวอร์</Fit></Bold>
                <H2 $top={20}><Fit w={229}>วิทยาลัยเทคนิคสัตหีบ</Fit></H2>
                <MapBox>
                  <MapArt />
                  <Label $x={178} $y={179} $c="#188038"><Fit w={48}>หาดบ้าน</Fit></Label>
                  <Label $x={189} $y={193} $c="#188038"><Fit w={37}>อำเภอ</Fit></Label>
                  <Label $x={160} $y={247} $c="#d56e0c"><Fit w={71}>ริมผา ลาภิน</Fit></Label>
                  <LatinLabel $x={99} $y={286} $c="#d81b60"><Fit w={119}>MASON PATTAYA</Fit></LatinLabel>
                  <Label $x={301} $y={145} $c="#546e7a"><Fit w={121}>วิทยาลัยเกษตรและ</Fit></Label>
                  <Label $x={301} $y={160} $c="#546e7a"><Fit w={101}>เทคโนโลยีชลบุรี</Fit></Label>
                  <Label $x={315} $y={194} $c="#c5221f"><Fit w={49}>วิทยาลัย</Fit></Label>
                  <Label $x={315} $y={208} $c="#c5221f"><Fit w={75}>เทคนิคสัตหีบ</Fit></Label>
                  <Label $x={424} $y={60} $c="#4b5a66"><Fit w={49}>หมู่บ้าน</Fit></Label>
                  <Label $x={423} $y={73} $c="#4b5a66"><Fit w={52}>สินธารา</Fit></Label>
                  <Shield $x={478} $y={54}>1063</Shield>
                  <Shield $x={476} $y={266}>1008</Shield>
                  <Card>
                    <CardCol>
                      <CardLine $size={14} $lh={18} $c="#000"><Fit w={124}>วิทยาลัยเทคนิคสัตหีบ</Fit></CardLine>
                      <CardLine $size={12} $lh={15} $top={7} $c="#5b5b5b"><Fit w={177}>หมู่ที่ 3 193 ถ. สุขุมวิท ตำบล นาจอม</Fit></CardLine>
                      <CardLine $size={12} $lh={15} $c="#5b5b5b"><Fit w={158}>เทียน อำเภอสัตหีบ ชลบุรี 20250</Fit></CardLine>
                      <CardLine $size={13} $lh={16} $top={5} $c="#5b5b5b" $weight={500}>
                        <Fit w={19}>4.3</Fit>
                        <StarGap><Stars /></StarGap>
                        <Blue><Fit w={69}>232 ความเห็น</Fit></Blue>
                      </CardLine>
                      <CardLine $size={12} $lh={16} $top={10} $c="#1a73e8"><Fit w={89}>ดูแผนที่ขนาดใหญ่</Fit></CardLine>
                    </CardCol>
                    <Route>
                      <svg width="18" height="18" viewBox="0 0 18 18" fill="none"><path d="M1 2 9 10" stroke="#b5d2f6" strokeWidth="4" /><path d="M9 18V11L15 4" stroke="#5e9be8" strokeWidth="4.500" /><path d="M9 0H18V9Z" fill="#5e9be8" /></svg>
                      <Fit w={38}>เส้นทาง</Fit>
                    </Route>
                  </Card>
                </MapBox>
              </Content>
              <Scroll>
                <Arrow><Ic w={7} h={6} sw={2}><path stroke="#a3a3a3" d="M.5 5 3.500 1.500 6.500 5" /></Ic></Arrow>
                <Thumb />
                <Spacer />
                <Arrow><Ic w={7} h={6} sw={2}><path stroke="#505050" d="M.5 1 3.500 4.500 6.500 1" /></Ic></Arrow>
              </Scroll>
            </Middle>
            <HBar />
            <Frame $bg="green" $h={191}>
              <Bold $top={17}><Fit w={153}>ชื่อ:ธีรศักดิ์ เบ็ญจรงค์</Fit></Bold>
              <Bold $top={16}><Fit w={187}>รหัสนักศึกษา:65201280022</Fit></Bold>
              <Bold $top={16}><Fit w={263}>แผนกเทคนิคคอมพิวเตอร์ ชั้น ปวช2/1</Fit></Bold>
              <Bold $top={16}><Fit w={207}>อีเมล:65201280022@tatc.ac.th</Fit></Bold>
            </Frame>
          </Frames>
        </Main>
      </Browser>
      <TaskBar />
    </Screen>
  );
}
